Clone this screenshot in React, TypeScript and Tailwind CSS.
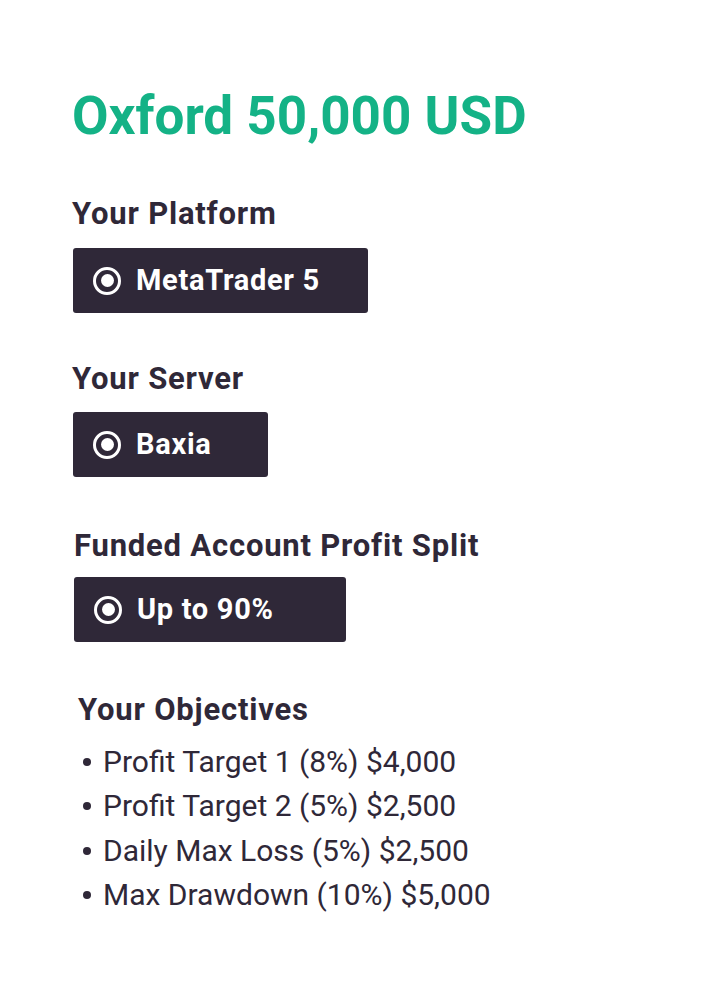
import React from "react";

function Radio() {
  return (
    <span className="flex h-[28px] w-[28px] shrink-0 items-center justify-center rounded-full border-[3px] border-white">
      <span className="h-[13px] w-[13px] rounded-full bg-white" />
    </span>
  );
}

function Option({ label, width, ml = "ml-0" }: { label: string; width: string; ml?: string }) {
  return (
    <div className={`flex h-[65px] items-center gap-[15px] rounded-[3px] bg-[#2f2838] pl-[20px] ${width} ${ml}`}>
      <Radio />
      <span className="text-[29px] font-bold leading-none tracking-[0.7px] text-white">{label}</span>
    </div>
  );
}

const headingCls = "text-[31px] font-bold leading-[30px] tracking-[0.8px] text-[#2f2838]";

export default function App() {
  const items = [
    "Profit Target 1 (8%) $4,000",
    "Profit Target 2 (5%) $2,500",
    "Daily Max Loss (5%) $2,500",
    "Max Drawdown (10%) $5,000",
  ];
  return (
    <div className="min-h-[1000px] w-[712px] bg-white pl-[72px] pt-[90px]" style={{ fontFamily: "Roboto, 'Liberation Sans', sans-serif" }}>
      <h1 className="text-[53px] font-bold leading-[53px] text-[#14b286]">Oxford 50,000 USD</h1>

      <h2 className={`${headingCls} mt-[56px]`}>Your Platform</h2>
      <div className="mt-[19px]">
        <Option label="MetaTrader 5" width="w-[295px]" ml="ml-[1px]" />
      </div>

      <h2 className={`${headingCls} mt-[51px]`}>Your Server</h2>
      <div className="mt-[18px]">
        <Option label="Baxia" width="w-[195px]" ml="ml-[1px]" />
      </div>

      <h2 className={`${headingCls} ml-[2px] mt-[54px]`}>Funded Account Profit Split</h2>
      <div className="mt-[16px]">
        <Option label="Up to 90%" width="w-[272px]" ml="ml-[2px]" />
      </div>

      <h2 className={`${headingCls} ml-[6px] mt-[53px]`}>Your Objectives</h2>
      <ul className="ml-[11px] mt-[14.5px] flex flex-col">
        {items.map((t) => (
          <li key={t} className="flex h-[44.5px] items-center gap-[12px] text-[30px] leading-[30px] text-[#2f2838]">
            <span className="h-[8px] w-[8px] shrink-0 rounded-full bg-[#2f2838]" />
            <span>{t}</span>
          </li>
        ))}
      </ul>
    </div>
  );
}
